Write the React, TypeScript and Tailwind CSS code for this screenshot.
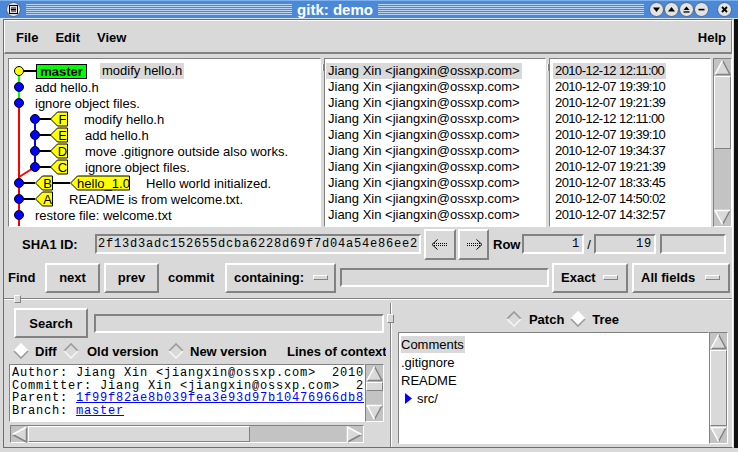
import React from "react";

const RAISED = "border-2 border-t-white border-l-white border-b-[#828282] border-r-[#828282]";
const RAISED1 = "border border-t-white border-l-white border-b-[#828282] border-r-[#828282]";
const SUNKEN = "border-2 border-t-[#828282] border-l-[#828282] border-b-white border-r-white";
const SUNKEN1 = "border border-t-[#828282] border-l-[#828282] border-b-white border-r-white";
const MONO = "font-['Liberation_Mono','Courier_New',monospace] text-[12px] tracking-[0.8px]";

function Arrow({ dir }: { dir: "up" | "down" | "left" | "right" }) {
  const d = {
    up: { p: "8.5,1.5 16,15.5 1,15.5", l: "1,15.5 8.5,1.5", k: "8.5,1.5 16,15.5 1,15.5" },
    down: { p: "1,1.5 16,1.5 8.5,15.5", l: "8.5,15.5 1,1.5 16,1.5", k: "16,1.5 8.5,15.5" },
    left: { p: "1.5,8.5 15.5,1 15.5,16", l: "1.5,8.5 15.5,1", k: "15.5,1 15.5,16 1.5,8.5" },
    right: { p: "1.5,1 15.5,8.5 1.5,16", l: "1.5,16 1.5,1 15.5,8.5", k: "15.5,8.5 1.5,16" },
  }[dir];
  return (
    <svg width="17" height="17" viewBox="0 0 17 17" className="shrink-0 block">
      <polygon points={d.p} fill="#d9d9d9" />
      <polyline points={d.k} fill="none" stroke="#828282" strokeWidth="1.5" />
      <polyline points={d.l} fill="none" stroke="#ffffff" strokeWidth="1.5" />
    </svg>
  );
}

function Circle({ children }: { children: React.ReactNode }) {
  return (
    <div className="w-[15px] h-[15px] rounded-full bg-[#e3e3e3] border border-[#47658c] flex items-center justify-center shrink-0">
      {children}
    </div>
  );
}

const STRIPES =
  "flex-1 h-[11px] bg-[repeating-linear-gradient(to_bottom,#b9d3f3_0px,#b9d3f3_1px,#4b89d8_1px,#4b89d8_2px)]";

function TitleBar() {
  return (
    <div className="h-[19px] shrink-0 flex items-center bg-[#4b89d8] border-t border-t-[#7db0ee] border-b border-b-[#d4e3f6] pr-[6px]">
      <div className="ml-[6px]">
        <Circle>
          <svg width="9" height="9" viewBox="0 0 9 9">
            <rect x="0.5" y="0.5" width="8" height="8" fill="none" stroke="#000" />
            <line x1="2" y1="3" x2="7" y2="3" stroke="#000" />
            <line x1="2" y1="4.5" x2="7" y2="4.5" stroke="#000" />
            <line x1="2" y1="6" x2="7" y2="6" stroke="#000" />
          </svg>
        </Circle>
      </div>
      <div className={`ml-[5px] ${STRIPES}`} />
      <span className="mx-[5px] text-white font-bold text-[15px] leading-none">gitk: demo</span>
      <div className={STRIPES} />
      <div className="ml-[5px] flex">
        <Circle>
          <svg width="9" height="9" viewBox="0 0 9 9"><polygon points="1,2.5 8,2.5 4.5,7" fill="#000" /></svg>
        </Circle>
        <Circle>
          <svg width="9" height="9" viewBox="0 0 9 9"><polygon points="1,6.5 8,6.5 4.5,2" fill="#000" /></svg>
        </Circle>
        <Circle>
          <svg width="9" height="9" viewBox="0 0 9 9">
            <polygon points="1.5,5 7.5,5 4.5,1.5" fill="#000" />
            <rect x="1.5" y="6.3" width="6" height="1.3" fill="#000" />
          </svg>
        </Circle>
        <Circle>
          <svg width="9" height="9" viewBox="0 0 9 9"><rect x="1.5" y="3.8" width="6" height="1.6" fill="#000" /></svg>
        </Circle>
      </div>
      <div className="ml-[8px]">
        <Circle>
          <svg width="9" height="9" viewBox="0 0 9 9">
            <line x1="2" y1="2" x2="7" y2="7" stroke="#000" strokeWidth="1.8" />
            <line x1="7" y1="2" x2="2" y2="7" stroke="#000" strokeWidth="1.8" />
          </svg>
        </Circle>
      </div>
    </div>
  );
}

function Menubar() {
  return (
    <div className="h-[34px] shrink-0 flex items-center pt-[2px] pl-[11px] pr-[5px] font-bold border-t border-l border-t-white border-l-white border-b-2 border-b-[#828282] border-r border-r-[#828282]">
      <span>File</span>
      <span className="ml-[17px]">Edit</span>
      <span className="ml-[17px]">View</span>
      <span className="ml-auto">Help</span>
    </div>
  );
}

const ROWS = [0, 1, 2, 3, 4, 5, 6, 7, 8, 9].map((i) => 12 + 16 * i);

function Flag({ y, x, w, label }: { y: number; x: number; w: number; label: string }) {
  const pts = `${x},${y} ${x + 7},${y - 7} ${x + w},${y - 7} ${x + w},${y + 7} ${x + 7},${y + 7}`;
  return (
    <g>
      <polygon points={pts} fill="#ffff00" stroke="#000" strokeWidth="1" />
      <text
        x={x + 7 + (w - 7) / 2}
        y={y + 4.5}
        textAnchor="middle"
        fontSize="13"
        fontFamily="Liberation Sans, Arial, sans-serif"
        fill="#000"
      >
        {label}
      </text>
    </g>
  );
}

function GraphSvg() {
  const [r0, r1, r2, r3, r4, r5, r6, r7, r8, r9] = ROWS;
  return (
    <svg className="absolute left-0 top-0" width="311" height="167" viewBox="0 0 311 167">
      <line x1="10" y1={r0} x2="10" y2={r2} stroke="#00ff00" strokeWidth="2" />
      <line x1="10" y1={r2} x2="10" y2="170" stroke="#ff0000" strokeWidth="2" />
      <polyline points={`26,${r6} 10,${r6 + 10}`} fill="none" stroke="#ff0000" strokeWidth="2" />
      <line x1="26" y1={r3} x2="26" y2={r6} stroke="#0000ff" strokeWidth="2" />
      <line x1="10" y1={r0} x2="27" y2={r0} stroke="#000" strokeWidth="2" />
      {[r3, r4, r5, r6].map((y) => (
        <line key={y} x1="26" y1={y} x2="42" y2={y} stroke="#000" strokeWidth="2" />
      ))}
      <line x1="10" y1={r7} x2="26" y2={r7} stroke="#000" strokeWidth="2" />
      <line x1="44" y1={r7} x2="61" y2={r7} stroke="#000" strokeWidth="2" />
      <line x1="10" y1={r8} x2="26" y2={r8} stroke="#000" strokeWidth="2" />
      <rect x="27.5" y="5.5" width="50" height="14" fill="#00ff00" stroke="#000" strokeWidth="1" />
      <text x="52.5" y="17" textAnchor="middle" fontSize="13" fontWeight="bold" fontFamily="Liberation Sans, Arial, sans-serif" fill="#000">
        master
      </text>
      <Flag y={r3} x={41.5} w={17} label="F" />
      <Flag y={r4} x={41.5} w={17} label="E" />
      <Flag y={r5} x={41.5} w={17} label="D" />
      <Flag y={r6} x={41.5} w={17} label="C" />
      <Flag y={r7} x={26.5} w={17} label="B" />
      <Flag y={r7} x={61.5} w={59} label="hello_1.0" />
      <Flag y={r8} x={26.5} w={17} label="A" />
      <circle cx="10" cy={r0} r="4.5" fill="#ffff00" stroke="#000" strokeWidth="1" />
      {[r1, r2, r7, r8, r9].map((y) => (
        <circle key={y} cx="10" cy={y} r="4.5" fill="#0000ff" stroke="#000" strokeWidth="1" />
      ))}
      {[r3, r4, r5, r6].map((y) => (
        <circle key={y} cx="26" cy={y} r="4.5" fill="#0000ff" stroke="#000" strokeWidth="1" />
      ))}
    </svg>
  );
}

const MSGS: { t: string; pl: string; sel?: boolean }[] = [
  { t: "modify hello.h", pl: "pl-[91px]", sel: true },
  { t: "add hello.h", pl: "pl-[26px]" },
  { t: "ignore object files.", pl: "pl-[26px]" },
  { t: "modify hello.h", pl: "pl-[75px]" },
  { t: "add hello.h", pl: "pl-[76px]" },
  { t: "move .gitignore outside also works.", pl: "pl-[76px]" },
  { t: "ignore object files.", pl: "pl-[76px]" },
  { t: "Hello world initialized.", pl: "pl-[137px]" },
  { t: "README is from welcome.txt.", pl: "pl-[60px]" },
  { t: "restore file: welcome.txt", pl: "pl-[26px]" },
];

const DATES = [
  "2010-12-12 12:11:00",
  "2010-12-07 19:39:10",
  "2010-12-07 19:21:39",
  "2010-12-12 12:11:00",
  "2010-12-07 19:39:10",
  "2010-12-07 19:34:37",
  "2010-12-07 19:21:39",
  "2010-12-07 18:33:45",
  "2010-12-07 14:50:02",
  "2010-12-07 14:32:57",
];

function SashGap() {
  return (
    <div className="w-[3px] flex flex-col items-center pt-[6px]">
      <div className="w-[2px] h-[7px] border-l border-l-white border-r border-r-[#828282]" />
    </div>
  );
}

function TopPane() {
  return (
    <div className="mt-[4px] h-[169px] shrink-0 flex pl-[4px]">
      <div className={`relative w-[313px] h-full bg-white overflow-hidden ${SUNKEN1}`}>
        <GraphSvg />
        <div className="relative pt-[4px] flex flex-col">
          {MSGS.map((m, i) => (
            <div key={i} className={`h-[16px] flex items-center whitespace-nowrap ${m.pl}`}>
              {m.sel ? (
                <span className="bg-[#d9d9d9] px-[2px] h-[16px] leading-[16px]">{m.t}</span>
              ) : (
                <span>{m.t}</span>
              )}
            </div>
          ))}
        </div>
      </div>
      <SashGap />
      <div className={`w-[222px] h-full bg-white overflow-hidden ${SUNKEN1}`}>
        <div className="pt-[4px] flex flex-col">
          {DATES.map((_, i) => (
            <div key={i} className="h-[16px] flex items-center whitespace-nowrap pl-[1px]">
              <span className={`px-[2px] h-[16px] leading-[16px] ${i === 0 ? "bg-[#d9d9d9]" : ""}`}>
                Jiang Xin &lt;jiangxin@ossxp.com&gt;
              </span>
            </div>
          ))}
        </div>
      </div>
      <SashGap />
      <div className={`w-[162px] h-full bg-white overflow-hidden ${SUNKEN1}`}>
        <div className="pt-[4px] flex flex-col">
          {DATES.map((d, i) => (
            <div key={i} className="h-[16px] flex items-center whitespace-nowrap pl-[3px]">
              <span className={`px-[2px] h-[16px] leading-[16px] tracking-[-0.55px] ${i === 0 ? "bg-[#d9d9d9]" : ""}`}>
                {d}
              </span>
            </div>
          ))}
        </div>
      </div>
      <div className={`ml-[2px] w-[19px] h-full flex flex-col bg-[#c3c3c3] ${SUNKEN1}`}>
        <Arrow dir="up" />
        <div className={`h-[73px] shrink-0 bg-[#d9d9d9] ${RAISED1}`} />
        <div className="flex-1" />
        <Arrow dir="down" />
      </div>
    </div>
  );
}

function ArrowGlyph({ right }: { right?: boolean }) {
  return (
    <svg width="18" height="11" viewBox="0 0 18 11" className={right ? "-scale-x-100" : ""}>
      <path d="M6.5 0.5 L1 5.5 L6.5 10.5" fill="none" stroke="#000" strokeWidth="1" />
      <line x1="3" y1="4.5" x2="17" y2="4.5" stroke="#000" strokeWidth="1" strokeDasharray="1 1" />
      <line x1="3" y1="6.5" x2="17" y2="6.5" stroke="#000" strokeWidth="1" strokeDasharray="1 1" />
    </svg>
  );
}

function ShaRow() {
  return (
    <div className="h-[34px] shrink-0 flex items-center pl-[18px] font-bold">
      <div className="w-[73px]">SHA1 ID:</div>
      <div className={`w-[326px] h-[20px] flex items-center overflow-hidden whitespace-nowrap pl-[1px] font-normal ${SUNKEN}`}>
        <span className={MONO}>2f13d3adc152655dcba6228d69f7d04a54e86ee2</span>
      </div>
      <div className={`ml-[3px] w-[32px] h-[31px] flex items-center justify-center ${RAISED}`}>
        <ArrowGlyph />
      </div>
      <div className={`ml-[2px] w-[31px] h-[31px] flex items-center justify-center ${RAISED}`}>
        <ArrowGlyph right />
      </div>
      <div className="ml-[4px] w-[29px]">Row</div>
      <div className={`w-[62px] h-[20px] flex items-center justify-end pr-[2px] font-normal ${SUNKEN}`}>
        <span className={MONO}>1</span>
      </div>
      <div className="w-[10px] text-center font-normal">/</div>
      <div className={`w-[62px] h-[20px] flex items-center justify-end pr-[2px] font-normal ${SUNKEN}`}>
        <span className={MONO}>19</span>
      </div>
      <div className={`ml-[4px] w-[66px] h-[20px] ${SUNKEN}`} />
    </div>
  );
}

function MenuBtn({ w, label, pad }: { w: string; label: string; pad: string }) {
  return (
    <div className={`${w} h-[30px] flex items-center pl-[7px] ${pad} ${RAISED}`}>
      <span>{label}</span>
      <div className={`ml-auto w-[15px] h-[5px] bg-[#d9d9d9] ${RAISED1}`} />
    </div>
  );
}

function FindRow() {
  return (
    <div className="h-[33px] shrink-0 flex items-center pl-[4px] font-bold">
      <div className="w-[37px]">Find</div>
      <div className={`w-[55px] h-[30px] flex items-center justify-center ${RAISED}`}>next</div>
      <div className={`ml-[4px] w-[55px] h-[30px] flex items-center justify-center ${RAISED}`}>prev</div>
      <div className="ml-[9px] w-[57px]">commit</div>
      <MenuBtn w="w-[111px]" label="containing:" pad="pr-[6px]" />
      <div className={`ml-[4px] w-[209px] h-[19px] ${SUNKEN}`} />
      <div className="ml-[3px]">
        <MenuBtn w="w-[76px]" label="Exact" pad="pr-[8px]" />
      </div>
      <div className="ml-[4px]">
        <MenuBtn w="w-[98px]" label="All fields" pad="pr-[8px]" />
      </div>
    </div>
  );
}

function Separator() {
  return (
    <div className="h-[9px] shrink-0 flex items-center">
      <div className="w-[10px] h-[2px] border-t border-t-[#828282] border-b border-b-white" />
      <div className={`w-[7px] h-[8px] bg-[#d9d9d9] ${RAISED1}`} />
      <div className="flex-1 h-[2px] border-t border-t-[#828282] border-b border-b-white" />
    </div>
  );
}

function Diamond({ on }: { on?: boolean }) {
  return (
    <svg width="16" height="16" viewBox="0 0 16 16" className="shrink-0 block">
      <polygon points="8,1 15,8 8,15 1,8" fill={on ? "#ffffff" : "#d9d9d9"} />
      <polyline points="1,8 8,1 15,8" fill="none" stroke={on ? "#ffffff" : "#9a9a9a"} strokeWidth="1.6" />
      <polyline points="1,8 8,15 15,8" fill="none" stroke={on ? "#9a9a9a" : "#f4f4f4"} strokeWidth="1.6" />
    </svg>
  );
}

function BottomLeft() {
  return (
    <div className="w-[382px] flex flex-col">
      <div className="mt-[5px] h-[30px] flex items-center">
        <div className={`ml-[10px] w-[74px] h-[30px] flex items-center justify-center font-bold ${RAISED}`}>Search</div>
        <div className={`ml-[6px] w-[290px] h-[19px] ${SUNKEN}`} />
      </div>
      <div className="mt-[3px] h-[20px] flex items-center pl-[9px] whitespace-nowrap overflow-hidden font-bold">
        <Diamond on />
        <span className="ml-[6px] w-[28px] shrink-0">Diff</span>
        <Diamond />
        <span className="ml-[8px] w-[81px] shrink-0">Old version</span>
        <Diamond />
        <span className="ml-[6px] w-[97px] shrink-0">New version</span>
        <span className="shrink-0">Lines of context</span>
      </div>
      <div className="mt-[3px] h-[58px] flex pl-[5px]">
        <div className={`w-[356px] h-full bg-white overflow-hidden whitespace-pre pt-[2px] pl-[2px] leading-[12.7px] ${MONO} ${SUNKEN1}`}>
          <div>Author: Jiang Xin &lt;jiangxin@ossxp.com&gt;  2010</div>
          <div>Committer: Jiang Xin &lt;jiangxin@ossxp.com&gt;  2</div>
          <div>
            Parent: <span className="text-[#0000ff] underline">1f99f82ae8b039fea3e93d97b10476966db8</span>
          </div>
          <div>
            Branch: <span className="text-[#0000ff] underline">master</span>
          </div>
        </div>
        <div className={`w-[19px] h-full flex flex-col bg-[#c3c3c3] ${SUNKEN1}`}>
          <Arrow dir="up" />
          <div className={`h-[9px] shrink-0 bg-[#d9d9d9] ${RAISED1}`} />
          <div className="flex-1" />
          <Arrow dir="down" />
        </div>
      </div>
      <div className={`mt-[3px] ml-[6px] w-[354px] h-[18px] flex bg-[#c3c3c3] ${SUNKEN1}`}>
        <Arrow dir="left" />
        <div className={`w-[222px] h-full shrink-0 bg-[#d9d9d9] ${RAISED1}`} />
        <div className="flex-1" />
        <Arrow dir="right" />
      </div>
    </div>
  );
}

function Sash() {
  return (
    <div className="w-[9px] flex flex-col items-center">
      <div className="w-[2px] h-[11px] border-l border-l-[#828282] border-r border-r-white" />
      <div className={`w-[7px] h-[9px] bg-[#d9d9d9] ${RAISED1}`} />
      <div className="w-[2px] flex-1 border-l border-l-[#828282] border-r border-r-white" />
    </div>
  );
}

function BottomRight() {
  return (
    <div className="w-[337px] flex flex-col">
      <div className="mt-[7px] h-[18px] flex items-center justify-center font-bold pr-[2px]">
        <Diamond />
        <span className="ml-[7px]">Patch</span>
        <span className="ml-[6px]">
          <Diamond on />
        </span>
        <span className="ml-[6px]">Tree</span>
      </div>
      <div className="mt-[4px] h-[112px] flex pl-[3px]">
        <div className={`w-[311px] h-full bg-white overflow-hidden pt-[2px] pl-[2px] ${SUNKEN1}`}>
          <div className="h-[18px] flex items-center">
            <span className="bg-[#d9d9d9] py-[2px] pr-[1px]">Comments</span>
          </div>
          <div className="h-[18px] flex items-center">.gitignore</div>
          <div className="h-[18px] flex items-center">README</div>
          <div className="h-[18px] flex items-center pl-[4px]">
            <svg width="7" height="11" viewBox="0 0 7 11" className="shrink-0">
              <polygon points="0,0 7,5.5 0,11" fill="#0000ff" />
            </svg>
            <span className="ml-[5px]">src/</span>
          </div>
        </div>
        <div className={`w-[19px] h-full flex flex-col bg-[#c3c3c3] ${SUNKEN1}`}>
          <Arrow dir="up" />
          <div className={`flex-1 bg-[#d9d9d9] ${RAISED1}`} />
          <Arrow dir="down" />
        </div>
      </div>
    </div>
  );
}

export default function App() {
  return (
    <div className="w-[738px] h-[452px] overflow-hidden bg-[#d9d9d9] flex flex-col text-[13px] text-black leading-none font-['Liberation_Sans',Arial,Helvetica,sans-serif]">
      <TitleBar />
      <div className="h-[429px] shrink-0 flex">
        <div className="w-[3px]" />
        <div className="w-[730px] flex flex-col border border-[#6e6e6e] border-r-white">
          <Menubar />
          <TopPane />
          <ShaRow />
          <FindRow />
          <Separator />
          <div className="flex-1 flex min-h-0">
            <BottomLeft />
            <Sash />
            <BottomRight />
          </div>
        </div>
        <div className="w-[1px]" />
        <div className="w-[4px] bg-[#111111]" />
      </div>
      <div className="h-[4px] shrink-0" />
    </div>
  );
}
